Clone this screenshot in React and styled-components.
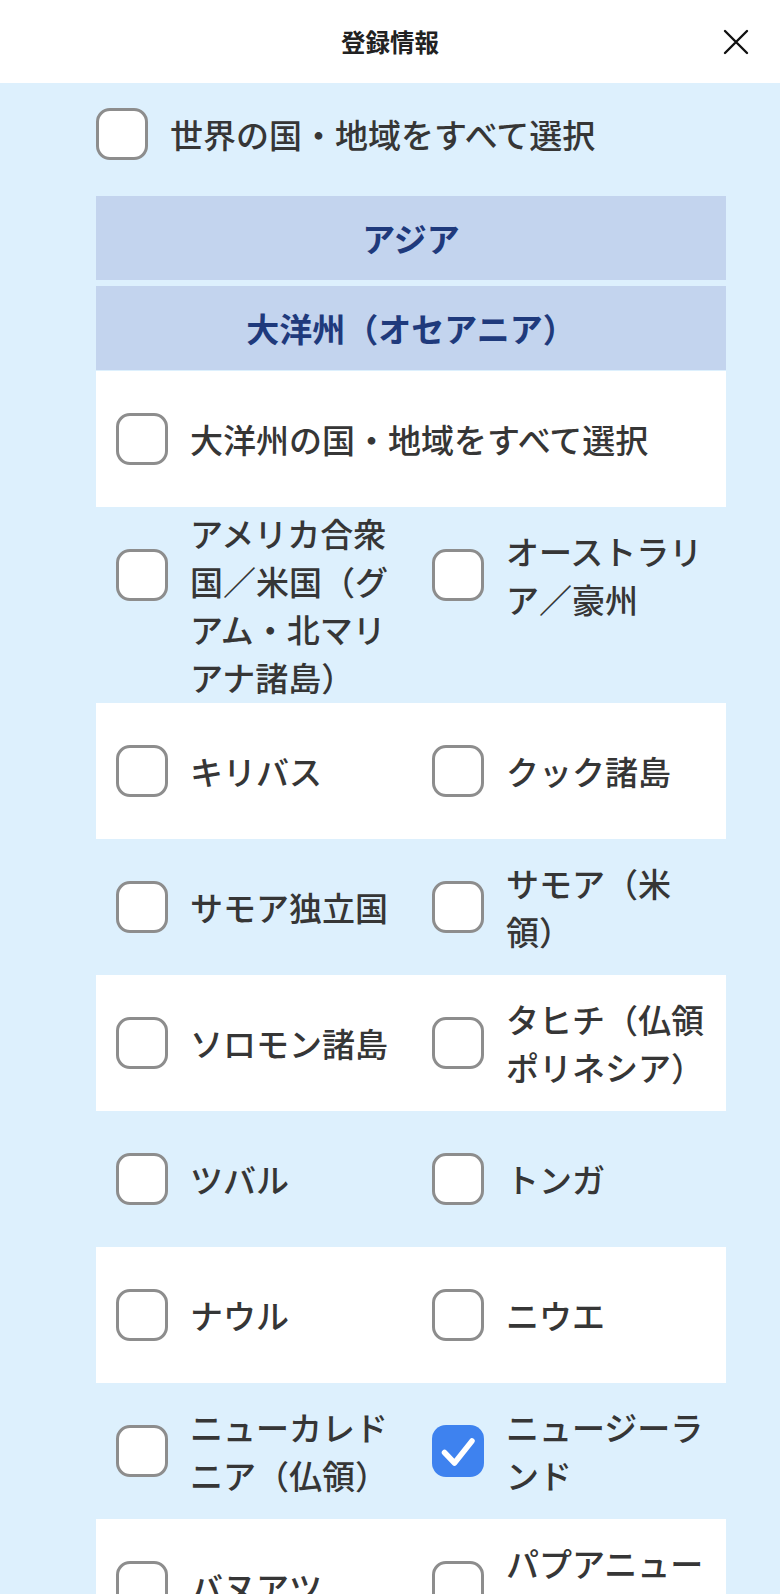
import React from "react";
import styled, { createGlobalStyle } from "styled-components";

const Global = createGlobalStyle`
  html, body { margin: 0; padding: 0; }
  body {
    background: #ddf0fd;
    font-family: "Noto Sans CJK JP", "Noto Sans", sans-serif;
    color: #333;
    text-spacing-trim: space-all;
  }
`;

const Page = styled.div`
  width: 780px;
  min-height: 1594px;
  background: #ddf0fd;
`;

const Header = styled.header`
  height: 83px;
  background: #fff;
  display: grid;
  grid-template-columns: 1fr auto 1fr;
  align-items: center;
`;

const Title = styled.h1`
  grid-column: 2;
  margin: 0;
  font-size: 24.5px;
  font-weight: 700;
  color: #222;
`;

const CloseButton = styled.button`
  grid-column: 3;
  justify-self: end;
  margin-right: 28px;
  width: 32px;
  height: 32px;
  padding: 0;
  border: none;
  background: transparent;
  display: flex;
  align-items: center;
  justify-content: center;
`;

const Content = styled.main`
  padding: 25px 54px 0 96px;
`;

const TopSelect = styled.label`
  display: flex;
  align-items: center;
  gap: 22px;
  font-size: 33px;
  line-height: 48px;
  font-weight: 500;
  color: #363636;
  margin-bottom: 36px;
`;

const SectionHeader = styled.div`
  height: 84px;
  background: #c3d4ee;
  color: #1f3a7c;
  font-size: 33px;
  font-weight: 700;
  display: flex;
  align-items: center;
  justify-content: center;
  margin-bottom: ${(p) => (p.$last ? "1px" : "6px")};
`;

const Row = styled.div`
  display: grid;
  grid-template-columns: ${(p) => (p.$full ? "1fr" : "1fr 1fr")};
  align-items: start;
  background: ${(p) => (p.$white ? "#fff" : "transparent")};
`;

const Cell = styled.label`
  display: flex;
  align-items: flex-start;
  gap: 22px;
  padding: 2px 10px 2px ${(p) => (p.$right ? "21px" : "20px")};
  font-size: 33px;
  line-height: 48px;
  font-weight: 500;
  color: #363636;
`;

const BoxSlot = styled.span`
  flex: none;
  height: 132px;
  display: flex;
  align-items: center;
`;

const Box = styled.span`
  width: 52px;
  height: 52px;
  box-sizing: border-box;
  border-radius: 14px;
  border: ${(p) => (p.$checked ? "none" : "3px solid #8d8d8d")};
  background: ${(p) => (p.$checked ? "#3e82ef" : "#fff")};
  display: flex;
  align-items: center;
  justify-content: center;
`;

const Label = styled.span`
  display: flex;
  align-items: center;
  min-height: ${(p) => (p.$inline ? "auto" : "132px")};
`;

function Checkbox({ checked }) {
  return (
    <Box $checked={checked}>
      {checked && (
        <svg width="52" height="52" viewBox="0 0 52 52">
          <path
            d="M12.5 27.5 L22.5 38 L40 16"
            fill="none"
            stroke="#fff"
            strokeWidth="5.5"
            strokeLinecap="round"
            strokeLinejoin="round"
          />
        </svg>
      )}
    </Box>
  );
}

function Option({ text, right, checked }) {
  return (
    <Cell $right={right}>
      <BoxSlot>
        <Checkbox checked={checked} />
      </BoxSlot>
      <Label>{text}</Label>
    </Cell>
  );
}

const pairs = [
  ["アメリカ合衆国／米国（グアム・北マリアナ諸島）", "オーストラリア／豪州"],
  ["キリバス", "クック諸島"],
  ["サモア独立国", "サモア（米領）"],
  ["ソロモン諸島", "タヒチ（仏領ポリネシア）"],
  ["ツバル", "トンガ"],
  ["ナウル", "ニウエ"],
  ["ニューカレドニア（仏領）", "ニュージーランド"],
  ["バヌアツ", "パプアニューギニア"],
  ["パラオ", "フィジー"],
  ["マーシャル諸島", "ミクロネシア"],
];

const checkedSet = new Set(["ニュージーランド"]);

export default function App() {
  return (
    <Page>
      <Global />
      <Header>
        <Title>登録情報</Title>
        <CloseButton aria-label="閉じる">
          <svg width="26" height="26" viewBox="0 0 26 26">
            <path d="M2 2 L24 24 M24 2 L2 24" stroke="#111" strokeWidth="2.4" strokeLinecap="round" />
          </svg>
        </CloseButton>
      </Header>
      <Content>
        <TopSelect>
          <Checkbox />
          <Label $inline>世界の国・地域をすべて選択</Label>
        </TopSelect>
        <SectionHeader>アジア</SectionHeader>
        <SectionHeader $last>大洋州（オセアニア）</SectionHeader>
        <Row $full $white>
          <Option text="大洋州の国・地域をすべて選択" />
        </Row>
        {pairs.map(([a, b], i) => (
          <Row key={a} $white={i % 2 === 1}>
            <Option text={a} checked={checkedSet.has(a)} />
            <Option text={b} right checked={checkedSet.has(b)} />
          </Row>
        ))}
      </Content>
    </Page>
  );
}
